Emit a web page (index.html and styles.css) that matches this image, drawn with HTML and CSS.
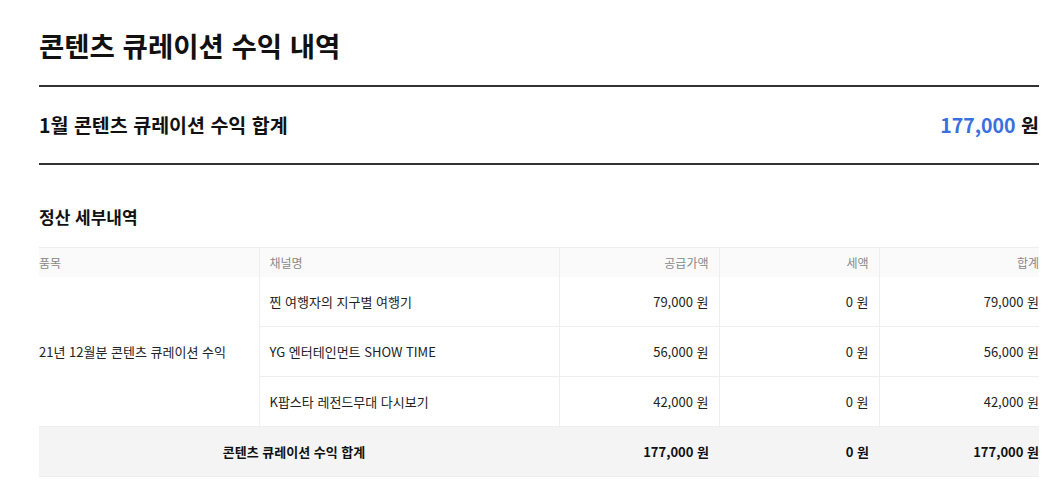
FILE: index.html
```html
<!DOCTYPE html>
<html lang="ko">
<head>
<meta charset="utf-8">
<title>콘텐츠 큐레이션 수익 내역</title>
<link rel="stylesheet" href="styles.css">
</head>
<body>
<div class="page">
  <h1 class="title">콘텐츠 큐레이션 수익 내역</h1>
  <div class="summary">
    <h2 class="summary-label">1월 콘텐츠 큐레이션 수익 합계</h2>
    <div class="summary-amount"><span class="amount-num">177,000</span> 원</div>
  </div>
  <h3 class="section-title">정산 세부내역</h3>
  <table class="detail">
    <colgroup>
      <col class="c1"><col class="c2"><col class="c3"><col class="c4"><col class="c5">
    </colgroup>
    <thead>
      <tr>
        <th class="left first">품목</th>
        <th class="left">채널명</th>
        <th class="right">공급가액</th>
        <th class="right">세액</th>
        <th class="right last">합계</th>
      </tr>
    </thead>
    <tbody>
      <tr>
        <td class="left first item" rowspan="3">21년 12월분 콘텐츠 큐레이션 수익</td>
        <td class="left">찐 여행자의 지구별 여행기</td>
        <td class="right">79,000 원</td>
        <td class="right">0 원</td>
        <td class="right last">79,000 원</td>
      </tr>
      <tr>
        <td class="left">YG 엔터테인먼트 SHOW TIME</td>
        <td class="right">56,000 원</td>
        <td class="right">0 원</td>
        <td class="right last">56,000 원</td>
      </tr>
      <tr>
        <td class="left">K팝스타 레전드무대 다시보기</td>
        <td class="right">42,000 원</td>
        <td class="right">0 원</td>
        <td class="right last">42,000 원</td>
      </tr>
    </tbody>
    <tfoot>
      <tr>
        <td class="center first" colspan="2">콘텐츠 큐레이션 수익 합계</td>
        <td class="right">177,000 원</td>
        <td class="right">0 원</td>
        <td class="right last">177,000 원</td>
      </tr>
    </tfoot>
  </table>
</div>
</body>
</html>
```

FILE: styles.css
```css
html, body {
  margin: 0;
  padding: 0;
  background: #ffffff;
}

body {
  font-family: "Noto Sans CJK KR", "Noto Sans", sans-serif;
  color: #222222;
}

.page {
  width: 1000px;
  padding-left: 39px;
}

.title {
  margin: 0;
  padding: 26px 0 20px;
  font-size: 27.5px;
  line-height: 39px;
  font-weight: 700;
  color: #111111;
  border-bottom: 2px solid #333333;
}

.summary {
  height: 76px;
  display: flex;
  align-items: center;
  justify-content: space-between;
  border-bottom: 2px solid #333333;
}

.summary-label {
  margin: 0;
  font-size: 19.5px;
  line-height: 28px;
  font-weight: 700;
  color: #111111;
}

.summary-amount {
  font-size: 19.5px;
  line-height: 28px;
  font-weight: 700;
  color: #111111;
}

.amount-num {
  color: #3a6fe0;
}

.section-title {
  margin: 40px 0 18px;
  font-size: 17px;
  line-height: 24px;
  font-weight: 700;
  color: #111111;
}

.detail {
  width: 1000px;
  border-collapse: collapse;
  table-layout: fixed;
  font-size: 13px;
}

.c1 { width: 220px; }
.c2 { width: 300px; }
.c3, .c4, .c5 { width: 160px; }

.detail th {
  height: 29px;
  padding: 0 10px;
  font-size: 12px;
  font-weight: 400;
  color: #888888;
  background: #fafafa;
  border-top: 1px solid #eeeeee;
  border-left: 1px solid #eeeeee;
  vertical-align: middle;
}

.detail td {
  height: 49px;
  padding: 0 10px;
  color: #222222;
  border-left: 1px solid #eeeeee;
  border-bottom: 1px solid #eeeeee;
  vertical-align: middle;
}

.detail .first {
  padding-left: 0;
  border-left: none;
}

.detail .last {
  padding-right: 0;
}

.detail td.item {
  border-bottom: none;
}

.left { text-align: left; }
.right { text-align: right; }
.center { text-align: center; }

.detail tfoot td {
  background: #f4f4f4;
  font-weight: 700;
  color: #111111;
  border-left: none;
  border-top: 1px solid #eeeeee;
}
```
